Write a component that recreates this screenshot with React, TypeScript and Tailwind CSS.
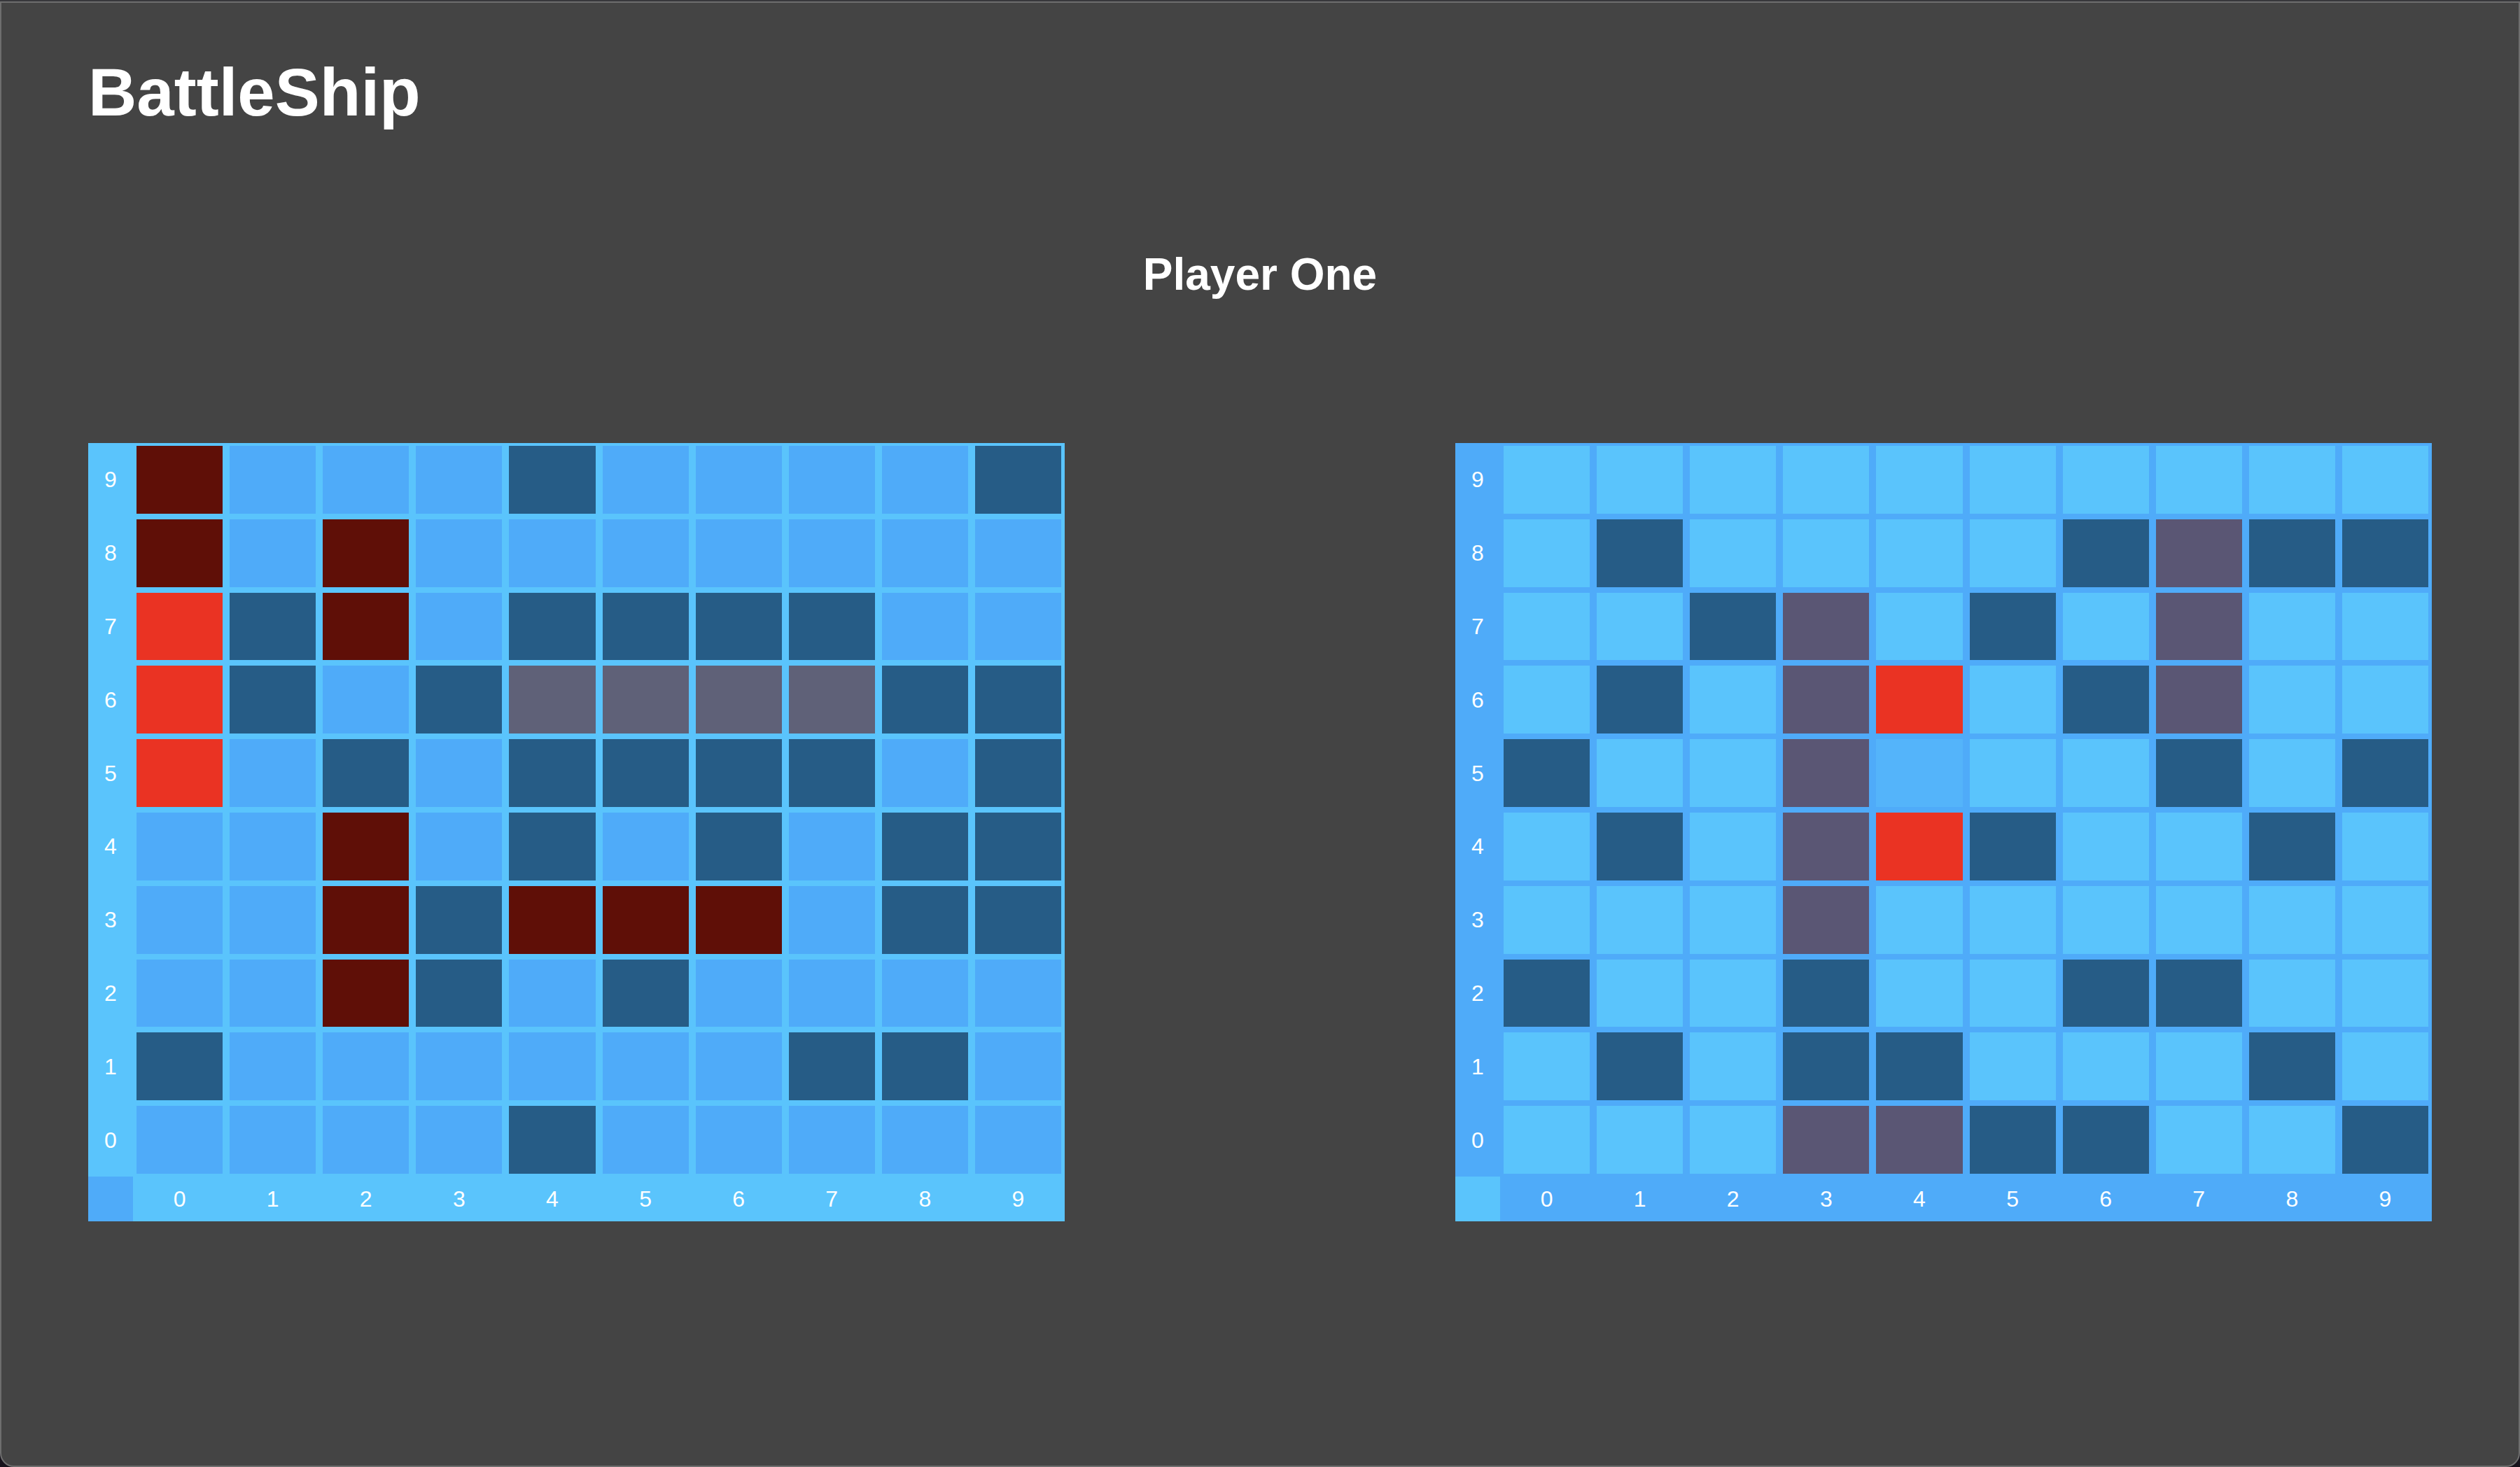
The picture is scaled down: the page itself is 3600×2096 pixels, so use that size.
type Theme = {
  frame: string;
  water: string;
  sunk: string;
};

const ownTheme: Theme = {
  frame: "bg-[#5ac4fc]",
  water: "bg-[#4fabf9]",
  sunk: "bg-[#5f6178]",
};

const enemyTheme: Theme = {
  frame: "bg-[#4fabf9]",
  water: "bg-[#5ac4fc]",
  sunk: "bg-[#5a5674]",
};

// . water   m miss   h hit   s ship   x sunk   a aimed at
const ownBoard = [
  "s...m....m",
  "s.s.......",
  "hms.mmmm..",
  "hm.mxxxxmm",
  "h.m.mmmm.m",
  "..s.m.m.mm",
  "..smsss.mm",
  "..sm.m....",
  "m......mm.",
  "....m.....",
];

const enemyBoard = [
  "..........",
  ".m....mxmm",
  "..mx.m.x..",
  ".m.xh.mx..",
  "m..xa..m.m",
  ".m.xhm..m.",
  "...x......",
  "m..m..mm..",
  ".m.mm...m.",
  "...xxmm..m",
];

const names: Record<string, string> = {
  ".": "water",
  m: "miss",
  h: "hit",
  s: "ship",
  x: "sunk",
  a: "target",
};

function cellColor(state: string, theme: Theme) {
  switch (state) {
    case "m":
      return "bg-[#265c86]";
    case "h":
      return "bg-[#ea3323]";
    case "s":
      return "bg-[#5f0f07]";
    case "x":
      return theme.sunk;
    case "a":
      return "bg-[#54b4fa]";
    default:
      return theme.water;
  }
}

function Board({ label, rows, theme }: { label: string; rows: string[]; theme: Theme }) {
  return (
    <section aria-label={label} className={`w-5/12 text-[32px] leading-10 ${theme.frame}`}>
      {rows.map((row, r) => (
        <div key={r} className="flex h-[5vh]">
          <div className="flex w-16 shrink-0 items-center justify-center">{9 - r}</div>
          <div className="grid flex-1 grid-cols-10">
            {row.split("").map((state, c) => (
              <button
                key={c}
                type="button"
                aria-label={`Column ${c}, row ${9 - r}: ${names[state]}`}
                className={`mx-[5px] my-1 cursor-pointer ${cellColor(state, theme)}`}
              />
            ))}
          </div>
        </div>
      ))}
      <div className="flex h-16">
        <div className={`w-16 shrink-0 ${theme.water}`} />
        <div className="grid flex-1 grid-cols-10 items-center text-center">
          {rows.map((_, c) => (
            <div key={c}>{c}</div>
          ))}
        </div>
      </div>
    </section>
  );
}

export default function App() {
  return (
    <div className="flex min-h-screen flex-col bg-[#17131c] font-['Liberation_Sans',Arial,sans-serif] text-white">
      <div className="h-0.5 bg-[#38383c]" />
      <main className="flex-1 rounded-b-[20px] border-2 border-[#6e6e6e] bg-[#444444] px-[124px] pt-[72px]">
        <h1 className="text-8xl leading-[112px] font-bold">BattleShip</h1>
        <h2 className="mt-[168px] text-center text-[64px] leading-[72px] font-bold">Player One</h2>
        <div className="mt-[205px] flex justify-between">
          <Board label="Your fleet" rows={ownBoard} theme={ownTheme} />
          <Board label="Enemy waters" rows={enemyBoard} theme={enemyTheme} />
        </div>
      </main>
    </div>
  );
}
